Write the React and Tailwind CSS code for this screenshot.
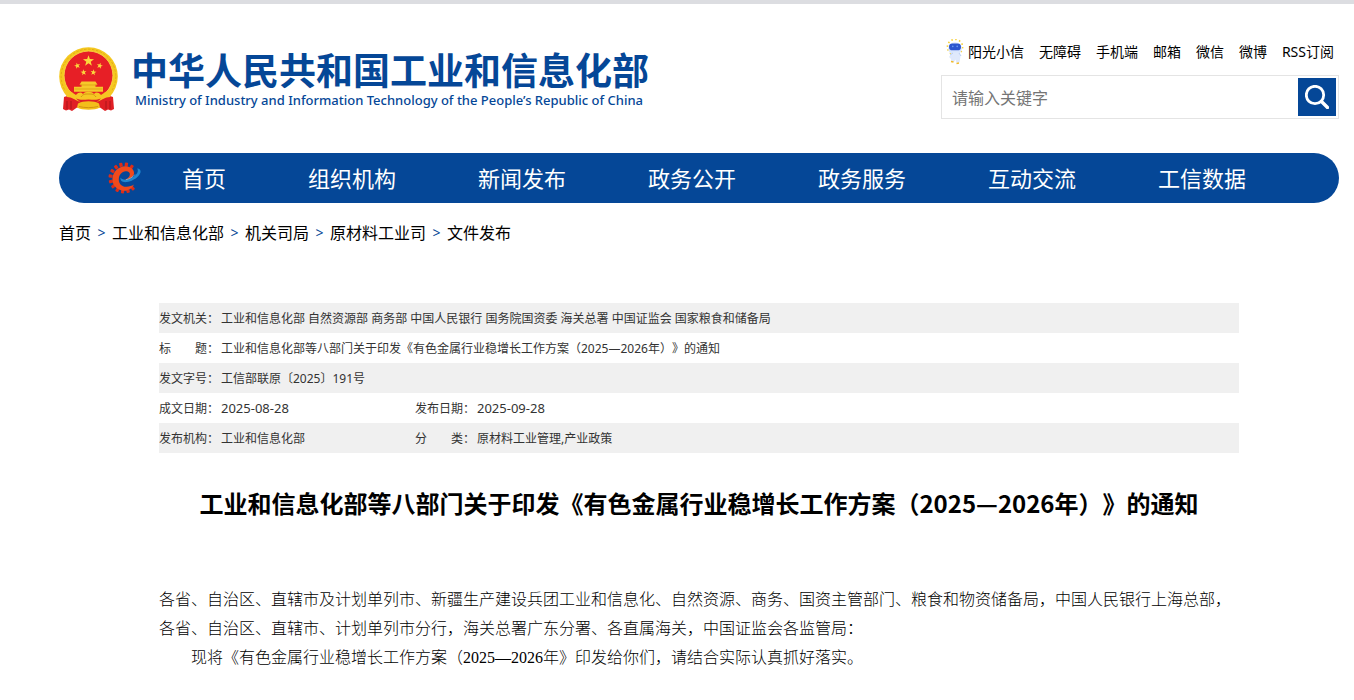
import React, { useState } from 'react';

const topLinks = ['无障碍', '手机端', '邮箱', '微信', '微博', 'RSS订阅'];

const navItems = ['首页', '组织机构', '新闻发布', '政务公开', '政务服务', '互动交流', '工信数据'];

const crumbs = ['首页', '工业和信息化部', '机关司局', '原材料工业司', '文件发布'];

const documentTitle = '工业和信息化部等八部门关于印发《有色金属行业稳增长工作方案（2025—2026年）》的通知';

const metaRows = [
  [
    {
      label: '发文机关：',
      value: '工业和信息化部 自然资源部 商务部 中国人民银行 国务院国资委 海关总署 中国证监会 国家粮食和储备局'
    }
  ],
  [{ label: '标　　题：', value: documentTitle }],
  [{ label: '发文字号：', value: '工信部联原〔2025〕191号' }],
  [
    { label: '成文日期：', value: '2025-08-28', isDate: true },
    { label: '发布日期：', value: '2025-09-28', isDate: true }
  ],
  [
    { label: '发布机构：', value: '工业和信息化部' },
    { label: '分　　类：', value: '原材料工业管理,产业政策' }
  ]
];

const STAR = 'M0 -1L.235 -.324L.951 -.309L.38 .124L.588 .809L0 .4L-.588 .809L-.38 .124L-.951 -.309L-.235 -.324Z';

function Emblem() {
  return (
    <svg viewBox="0 0 60 66" className="h-[66px] w-[60px] shrink-0" aria-hidden="true">
      <circle cx="29.5" cy="29.5" r="29.3" fill="#f5c81f" />
      <circle cx="29.5" cy="29.5" r="27.3" fill="none" stroke="#e3ac17" strokeWidth="1" strokeDasharray="2.4 1.6" />
      <circle cx="29.5" cy="28.5" r="24.4" fill="#e71f26" stroke="#f9d84a" strokeWidth="0.8" />
      <g fill="#fbd93c">
        <path d={STAR} transform="translate(29.5 14) scale(5.8)" />
        <path d={STAR} transform="translate(18.3 18.8) rotate(-15) scale(3.2)" />
        <path d={STAR} transform="translate(40.7 18.8) rotate(15) scale(3.2)" />
        <path d={STAR} transform="translate(24.6 25.4) rotate(-8) scale(3.1)" />
        <path d={STAR} transform="translate(34.4 25.4) rotate(8) scale(3.1)" />
      </g>
      <path d="M22.5 34.5h14l2 3.200h-2v2h7.500v5h-29v-5h7.500v-2h-2z" fill="#f6c92a" />
      <path d="M21 38h17M15.500 42h28" stroke="#d99a10" strokeWidth="0.700" />
      <path
        d="M5 50c4-2 8-1 11 1l13.500 4L43 51c3-2 7-3 11-1l1 12-3 1.500-3-1-3 1.500-5-3.500H18L13 64l-3-1.500-3 1L4 62z"
        fill="#e01f25"
      />
      <path d="M8 54v8M12 54v8M47 54v8M51 54v8" stroke="#a5131a" strokeWidth="0.900" />
      <path
        d="M5 43c6 0 9 3 12 5 3-3 5-3 7-1 2-3 9-3 11 0 2-2 4-2 7 1 3-2 6-5 12-5l-3 7c-5 0-8 3-11 4-5 3-16 3-21 0-3-1-6-4-11-4z"
        fill="#f6c623"
      />
      <path d="M17 51.500c5 2 8 1 12.500 1s7.500 1 12.500-1l-4 3.500c-5 2-12 2-17 0z" fill="#e01f25" />
      <path d="M19 56.500c5-3 16-3 21 0l1 4c-5 3-18 3-23 0z" fill="#f3be1b" />
      <path d="M22 50c2-3 4-3 7.500-3s5.500 0 7.500 3M20 59.500c6 1.500 13 1.500 19 0" fill="none" stroke="#c98a0c" strokeWidth="0.800" />
    </svg>
  );
}

function Robot() {
  return (
    <svg viewBox="0 0 20 26" className="h-[26px] w-5" aria-hidden="true">
      <circle cx="9" cy="8" r="7.600" fill="none" stroke="#f6cf37" strokeWidth="1.600" strokeDasharray="1.500 2.478" />
      <ellipse cx="9" cy="9.500" rx="6.800" ry="6.200" fill="#d9e6fc" />
      <rect x="3" y="4.500" width="12" height="6.800" rx="3.400" fill="#2c55cf" />
      <circle cx="6.800" cy="7.400" r="0.800" fill="#6a9df0" />
      <circle cx="11.200" cy="7.400" r="0.800" fill="#6a9df0" />
      <path d="M6 13.500h7l1.500 4-1 6h-3l-1-3-1.500 2.500H5.500l-.5-3-2-2z" fill="#dfe9fb" />
      <path d="M4 16l3-2M13 14l2 3" stroke="#b7cdf3" />
      <path d="M5 22.500l2.500.5M10.500 24.500l2.500-.5" stroke="#f2bb2c" strokeWidth="1.500" />
    </svg>
  );
}

function GearLogo() {
  const teeth = [-80, -56, -103, -126, -149, -172, 165, 142, 119, 96, 73, 50];

  return (
    <svg viewBox="0 0 34 34" className="h-[34px] w-[34px]" aria-hidden="true">
      <g fill="#dc2c18">
        {teeth.map((angle) => (
          <rect key={angle} x="11.500" y="-1.600" width="4" height="3.200" rx="0.800" transform={`translate(16 17) rotate(${angle})`} />
        ))}
      </g>
      <path
        d="M26 23.500c-2.500 4.800-7.200 7-12 6C7.600 28.200 3.800 23 4.500 16.800 5.300 10 11.200 5 17.500 5.200c5.500.2 9 3.500 8.500 7.400-.5 4.200-5.500 7.500-12 7 4.500-.8 7.400-3 7.800-5.800.3-2.300-1.400-3.700-4-3.500-4 .3-6.800 3.600-7 7.700-.2 4.800 3.200 8 7.700 7.800 3-.2 5.300-1 7.500-2.300z"
        fill="#f04a1c"
      />
      <path
        d="M12.500 16.500c-.5 3.500 2.300 5.200 6.500 4.500 6.500-1 12.300-5.500 13.500-9.500.5-2-.5-3.900-3.500-3.900 1 1 1.200 2.700.2 4.400-2 3.500-7 6.500-11 6.700-3 .2-4.800-.7-5.700-2.200z"
        fill="#1f86cf"
      />
      <path d="M27 13.500c-2.500 3-5.500 4.500-9 5.200" fill="none" stroke="#7cc4ef" strokeWidth="0.700" />
    </svg>
  );
}

function SearchBox() {
  const [keyword, setKeyword] = useState('');

  return (
    <form
      role="search"
      onSubmit={(event) => event.preventDefault()}
      className="flex h-11 w-[398px] items-center border border-[#e4e4e4] p-0.5"
    >
      <input
        type="text"
        aria-label="搜索"
        placeholder="请输入关键字"
        value={keyword}
        onChange={(event) => setKeyword(event.target.value)}
        className="h-full min-w-0 flex-1 px-2 pt-0.5 text-base text-black placeholder:text-[#757575] focus:outline-none"
      />
      <button type="submit" aria-label="搜索" className="flex h-[38px] w-[38px] items-center justify-center bg-[#054797]">
        <svg viewBox="0 0 24 24" className="h-6 w-6" fill="none" stroke="#fff" strokeLinecap="round" aria-hidden="true">
          <circle cx="10" cy="10" r="8.700" strokeWidth="2.800" />
          <path d="M16.500 16.500l6 6" strokeWidth="3.400" />
        </svg>
      </button>
    </form>
  );
}

function Header() {
  return (
    <header className="flex justify-between pt-[35px]">
      <a href="#home" className="mt-2 flex h-[66px] gap-3 text-[#054797]">
        <Emblem />
        <span className="flex flex-col pt-1">
          <span className="text-[37px] leading-[40px] font-bold whitespace-nowrap">中华人民共和国工业和信息化部</span>
          <span className="pt-0.5 pl-1 text-[13px] leading-[14px] font-medium whitespace-nowrap">
            Ministry of Industry and Information Technology of the People’s Republic of China
          </span>
        </span>
      </a>
      <div className="flex flex-col items-end gap-[10px]">
        <div className="flex h-[26px] items-center gap-[15px] pr-[5px] text-sm text-black">
          <a href="#robot" className="flex items-center gap-0.5 whitespace-nowrap">
            <Robot />
            阳光小信
          </a>
          {topLinks.map((label) => (
            <a key={label} href="#top" className="whitespace-nowrap hover:text-[#054797]">
              {label}
            </a>
          ))}
        </div>
        <SearchBox />
      </div>
    </header>
  );
}

function NavBar() {
  return (
    <nav className="mt-[34px] flex h-[50px] items-center rounded-full bg-[#054797] pl-[49px] text-[22px] text-white">
      <GearLogo />
      <ul className="flex gap-[82px] pl-10">
        {navItems.map((label) => (
          <li key={label} className="whitespace-nowrap">
            <a href="#nav">{label}</a>
          </li>
        ))}
      </ul>
    </nav>
  );
}

function Breadcrumb() {
  return (
    <div className="mt-[18px] flex h-6 items-center gap-[6px] text-base text-black">
      {crumbs.map((label, index) => (
        <React.Fragment key={label}>
          {index > 0 && <span className="w-[9px] text-center text-sm text-[#054797]">&gt;</span>}
          <a href="#crumb" className="hover:text-[#054797]">
            {label}
          </a>
        </React.Fragment>
      ))}
    </div>
  );
}

function MetaTable() {
  return (
    <table className="w-full table-fixed text-left text-xs text-[#333]">
      <colgroup>
        <col className="w-[62px]" />
        <col className="w-[194px]" />
        <col className="w-[62px]" />
        <col />
      </colgroup>
      <tbody>
        {metaRows.map((cells) => (
          <tr key={cells[0].label} className="h-[30px] odd:bg-[#f0f0f0]">
            {cells.map((cell) => (
              <React.Fragment key={cell.label}>
                <th scope="row" className="p-0 pt-0.5 font-normal whitespace-nowrap">
                  {cell.label}
                </th>
                <td className={`p-0 pt-0.5 ${cell.isDate ? 'text-[13px]' : ''}`} colSpan={cells.length === 1 ? 3 : 1}>
                  {cell.value}
                </td>
              </React.Fragment>
            ))}
          </tr>
        ))}
      </tbody>
    </table>
  );
}

export default function App() {
  return (
    <div className="min-h-screen border-t-4 border-[#dcdde1] bg-white pr-[15px] pl-[59px] font-['Noto_Sans','Noto_Sans_CJK_SC',sans-serif] [text-spacing-trim:space-all]">
      <Header />
      <NavBar />
      <Breadcrumb />
      <main className="px-[100px] pt-[58px]">
        <MetaTable />
        <h1 className="mt-8 text-center font-['Noto_Sans_CJK_SC',sans-serif] text-2xl leading-9 font-bold text-black">
          {documentTitle}
        </h1>
        <article className="mt-16 font-['Liberation_Serif','Noto_Sans_CJK_SC',serif] text-base leading-[29px] font-light text-black">
          <p>
            各省、自治区、直辖市及计划单列市、新疆生产建设兵团工业和信息化、自然资源、商务、国资主管部门、粮食和物资储备局，中国人民银行上海总部，各省、自治区、直辖市、计划单列市分行，海关总署广东分署、各直属海关，中国证监会各监管局：
          </p>
          <p className="indent-8">现将《有色金属行业稳增长工作方案（2025—2026年》印发给你们，请结合实际认真抓好落实。</p>
        </article>
      </main>
    </div>
  );
}
